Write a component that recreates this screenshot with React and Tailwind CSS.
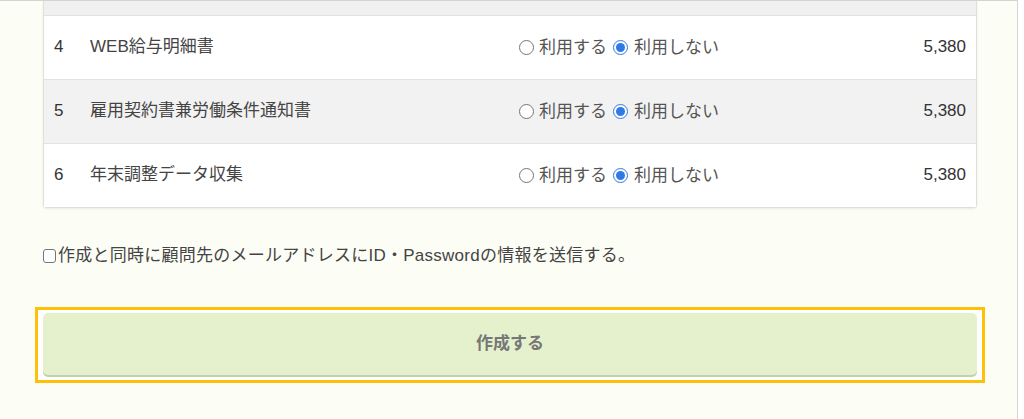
import React, { useState } from 'react';

const items = [
  { no: 4, name: 'WEB給与明細書', price: '5,380' },
  { no: 5, name: '雇用契約書兼労働条件通知書', price: '5,380' },
  { no: 6, name: '年末調整データ収集', price: '5,380' },
];

const Radio = ({ checked }) => (
  <span
    className={
      'flex items-center justify-center min-w-[15px] w-[15px] h-[15px] rounded-full border shrink-0 ' +
      (checked ? 'border-[#2f7ae5] bg-white' : 'border-[#767676] bg-white')
    }
  >
    {checked && <span className="w-[9px] h-[9px] rounded-full bg-[#2f7ae5]" />}
  </span>
);

const App = () => {
  const [usage, setUsage] = useState({ 4: false, 5: false, 6: false });
  const [sendMail, setSendMail] = useState(false);

  return (
    <div
      className="flex w-[1024px] h-[419px] bg-white overflow-hidden"
      style={{ fontFamily: '"Liberation Sans", "Noto Sans CJK JP", sans-serif' }}
    >
      <div className="w-[1018px] h-full bg-[#fcfef6] border-t border-r border-[#d4d4d4] px-[43px] pr-[40px]">
        {/* table card, its top is scrolled away */}
        <div className="w-[934px] bg-white border-x border-b border-[#dedede] rounded-b-[4px] shadow-[0_1px_2px_rgba(0,0,0,0.08)] text-[17px]">
          <div className="h-[14px] bg-[#f0f0f0]" />
          {items.map((item, i) => (
            <div
              key={item.no}
              className={
                'flex items-center h-[64px] border-t border-[#e2e2e2] pl-[10px] pr-[10px] pb-[2px] ' +
                (i === 1 ? 'bg-[#f2f2f2]' : 'bg-white')
              }
            >
              <span className="w-[36px] text-[#333]">{item.no}</span>
              <span className="w-[428px] text-[#444]">{item.name}</span>
              <div className="flex items-center text-[#555] pt-[2px]">
                <label className="flex items-center gap-[5px] ml-[1px] cursor-pointer" onClick={() => setUsage({ ...usage, [item.no]: true })}>
                  <Radio checked={usage[item.no]} />
                  <span>利用する</span>
                </label>
                <label className="flex items-center gap-[6px] ml-[6px] cursor-pointer" onClick={() => setUsage({ ...usage, [item.no]: false })}>
                  <Radio checked={!usage[item.no]} />
                  <span>利用しない</span>
                </label>
              </div>
              <span className="ml-auto text-[#333]">{item.price}</span>
            </div>
          ))}
        </div>

        <label
          className="flex items-center mt-[35px] text-[17px] text-[#444] tracking-[0.25px] cursor-pointer"
          onClick={() => setSendMail(!sendMail)}
        >
          <span
            className={
              'min-w-[13px] w-[13px] h-[14px] border border-[#767676] rounded-[3px] shrink-0 mr-[2px] ' +
              (sendMail ? 'bg-[#2f7ae5]' : 'bg-white')
            }
          />
          <span>作成と同時に顧問先のメールアドレスにID・Passwordの情報を送信する。</span>
        </label>

        <div className="w-[950px] -ml-[8px] mt-[38px] border-[3px] border-[#fdc10c] bg-white px-[5px] pt-[3px] pb-[5px]">
          <button
            type="button"
            className="w-[934px] h-[62px] rounded-[5px] bg-[#e5f1cc] shadow-[0_2px_0_#c5d1aa] text-[17px] font-bold text-[#777]"
          >
            作成する
          </button>
        </div>
      </div>
    </div>
  );
};

export default App;
